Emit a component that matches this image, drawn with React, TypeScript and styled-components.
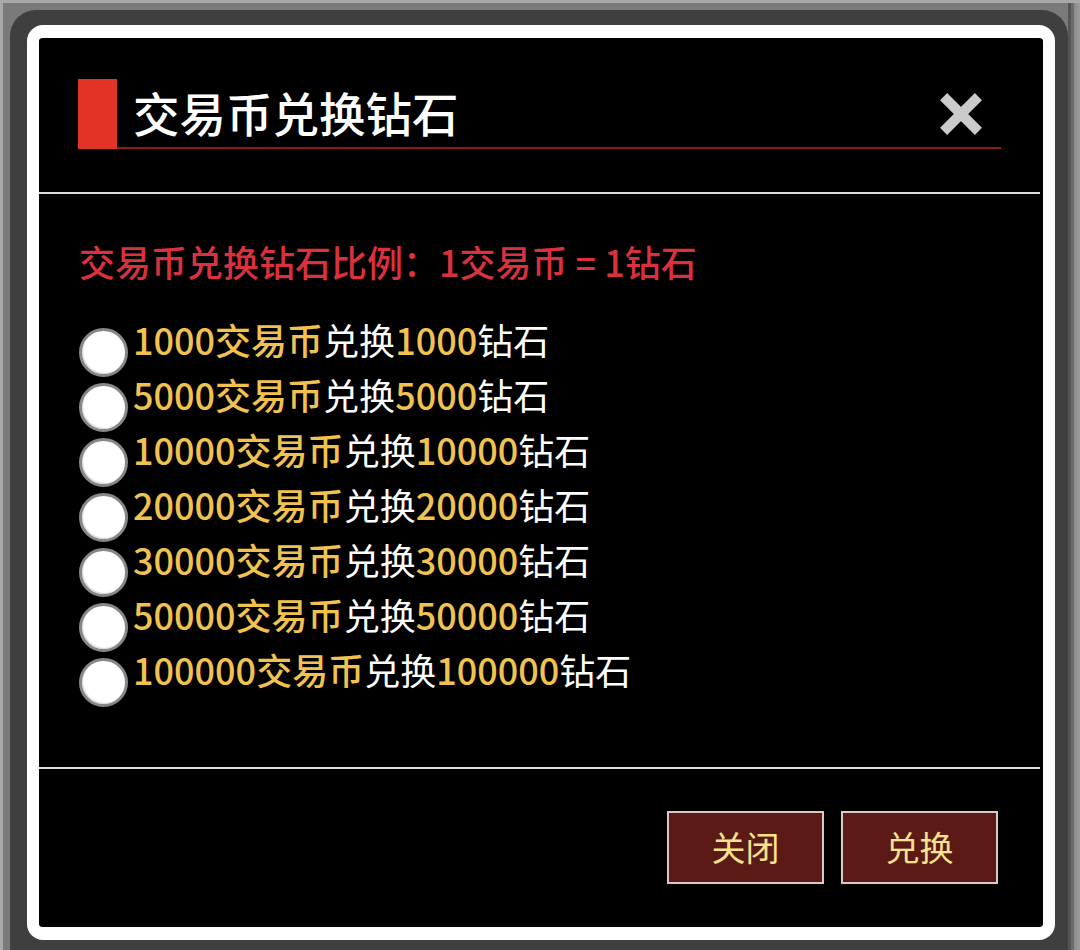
import React from "react";
import styled, { createGlobalStyle } from "styled-components";

const GlobalStyle = createGlobalStyle`
  html, body {
    margin: 0;
    padding: 0;
    background: #3f3f3f;
  }
  * { box-sizing: border-box; }
  body {
    font-family: "Noto Sans CJK SC", "Noto Sans", sans-serif;
  }
`;

const Screen = styled.div`
  width: 1080px;
  height: 950px;
  overflow: hidden;
  display: flex;
  border-left: 3px solid #a9a9a9;
  border-top: 3px solid #a9a9a9;
  padding: 7px 12px 0 7px;
  background: linear-gradient(
    90deg,
    #7a7a7a 0,
    #7a7a7a calc(100% - 12px),
    #555555 calc(100% - 12px),
    #555555 calc(100% - 9px),
    #6c6c6c calc(100% - 9px),
    #6c6c6c calc(100% - 6px),
    #8c8c8c calc(100% - 6px),
    #9c9c9c 100%
  );
`;

const DarkBox = styled.div`
  flex: 1;
  background: #3f3f3f;
  border-radius: 26px 26px 0 0;
  padding: 15px 13px 10px 17px;
`;

const Dialog = styled.div`
  background: #000;
  border-style: solid;
  border-color: #fff;
  border-width: 13px 12px;
  border-radius: 16px;
  display: flex;
  flex-direction: column;
`;

const Header = styled.div`
  display: flex;
  height: 70px;
  margin: 41px 42px 0 39px;
`;

const RedMark = styled.div`
  width: 39px;
  background: #e33326;
`;

const TitleBar = styled.div`
  flex: 1;
  display: flex;
  align-items: center;
  justify-content: space-between;
  border-bottom: 2px solid #8a1f1f;
  padding-left: 16px;
  padding-right: 19px;
`;

const Title = styled.h1`
  margin: 0;
  font-size: 46.5px;
  font-weight: 500;
  color: #ffffff;
  line-height: 1;
  padding-bottom: 2px;
`;

const CloseButton = styled.button`
  width: 42px;
  height: 42px;
  padding: 0;
  border: none;
  background: transparent;
  display: flex;
  cursor: pointer;
  margin-top: 2px;
`;

const Divider = styled.hr<{ $top: number }>`
  margin: ${(p) => p.$top}px 3px 0 0;
  border: none;
  height: 2px;
  background: #dcdcdc;
`;

const Ratio = styled.p`
  margin: 47px 0 0 40px;
  line-height: 40px;
  font-size: 36px;
  font-weight: 500;
  color: #d9313d;
  white-space: pre;
`;

const OptionList = styled.div`
  margin: 30.5px 0 0 40px;
  display: flex;
  flex-direction: column;
`;

const Option = styled.label`
  height: 55px;
  display: flex;
  align-items: flex-start;
  cursor: pointer;
`;

const Radio = styled.span`
  flex: none;
  width: 49px;
  height: 49px;
  margin-top: 16px;
  border-radius: 50%;
  background: #ffffff;
  border: 3px solid #878787;
  box-shadow: inset 1px -1px 1px rgba(0, 0, 0, 0.15);
`;

const OptionText = styled.span`
  margin-left: 5px;
  font-size: 36px;
  line-height: 55px;
  color: #ffffff;
  white-space: nowrap;
`;

const Gold = styled.span`
  color: #f1c24f;
  font-weight: 500;
`;

const Footer = styled.div`
  display: flex;
  justify-content: flex-end;
  gap: 17px;
  padding: 42px 45px 43px 0;
`;

const ActionButton = styled.button`
  width: 157px;
  height: 73px;
  background: #5c1a16;
  border: 2px solid #dcc6c6;
  color: #f6e28f;
  font-family: "Noto Sans CJK SC", "Noto Sans", sans-serif;
  font-size: 34px;
  padding: 0 0 2px;
  cursor: pointer;
`;

const amounts = ["1000", "5000", "10000", "20000", "30000", "50000", "100000"];

export default function App() {
  return (
    <>
      <GlobalStyle />
      <Screen>
        <DarkBox>
          <Dialog>
            <Header>
              <RedMark />
              <TitleBar>
                <Title>交易币兑换钻石</Title>
                <CloseButton aria-label="关闭">
                  <svg width="42" height="42" viewBox="0 0 42 42">
                    <line x1="3.6" y1="3.6" x2="38.4" y2="38.4" stroke="#cbcbcb" strokeWidth="10" />
                    <line x1="38.4" y1="3.6" x2="3.6" y2="38.4" stroke="#cbcbcb" strokeWidth="10" />
                  </svg>
                </CloseButton>
              </TitleBar>
            </Header>
            <Divider $top={43} />
            <Ratio>交易币兑换钻石比例：1交易币 = 1钻石</Ratio>
            <OptionList>
              {amounts.map((a) => (
                <Option key={a}>
                  <Radio />
                  <OptionText>
                    <Gold>{a}交易币</Gold>兑换<Gold>{a}</Gold>钻石
                  </OptionText>
                </Option>
              ))}
            </OptionList>
            <Divider $top={70.5} />
            <Footer>
              <ActionButton>关闭</ActionButton>
              <ActionButton>兑换</ActionButton>
            </Footer>
          </Dialog>
        </DarkBox>
      </Screen>
    </>
  );
}
